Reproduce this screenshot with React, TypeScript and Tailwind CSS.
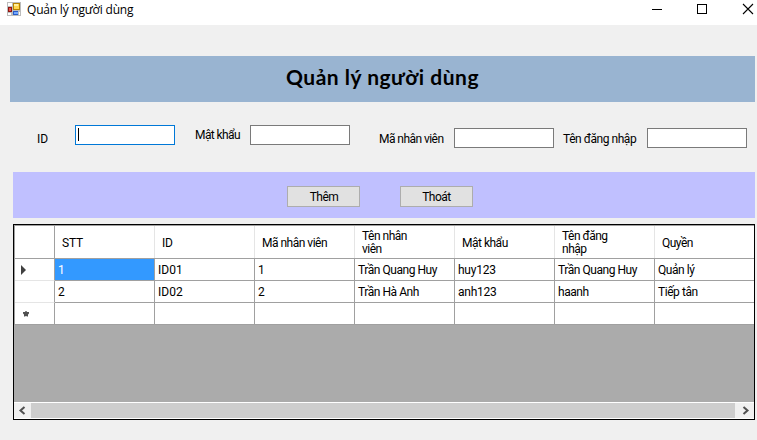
import React from "react";

const columns = ["STT", "ID", "Mã nhân viên", "Tên nhân viên", "Mật khẩu", "Tên đăng nhập", "Quyền"];
const rows = [
  ["1", "ID01", "1", "Trần Quang Huy", "huy123", "Trần Quang Huy", "Quản lý"],
  ["2", "ID02", "2", "Trần Hà Anh", "anh123", "haanh", "Tiếp tân"],
  ["", "", "", "", "", "", ""],
];

// Numbers and codes are set at their natural width, words slightly condensed.
function cellTracking(value: string) {
  if (/^(ID)?\d+$/.test(value)) return "tracking-normal";
  if (/\d/.test(value)) return "tracking-[-0.25px]";
  return "tracking-[-0.45px]";
}

function FormIcon() {
  return (
    <svg width="14" height="14" viewBox="0 0 14 14" shapeRendering="crispEdges" className="ml-[7px] mt-[2px] shrink-0">
      <path fill="#bcbcbc" d="M0 0h14v14H0z" />
      <path fill="#fff" d="M1 1h4v3H1zM1 11h3v2H1zM12 10h1v3h-1z" />
      <path fill="#b78300" d="M6 1h7v7H6z" />
      <path fill="#ffd64e" d="M7 2h5v5H7z" />
      <path fill="#ffef9d" d="M7 2h4v2H7z" />
      <path fill="#8e1510" d="M1 5h4v5H1z" />
      <path fill="#e9534b" d="M2 6h2v3H2z" />
      <path fill="#275bc8" d="M6 9h5v4H6z" />
      <path fill="#72a7ff" d="M7 10h4v2H7z" />
    </svg>
  );
}

function RowMarker({ index }: { index: number }) {
  if (index === 0)
    return (
      <svg width="5" height="10" viewBox="0 0 5 10" className="ml-[6px] mt-px">
        <path d="M0 0L5 5L0 10Z" fill="#404040" />
      </svg>
    );
  if (index === 2)
    return (
      <svg width="6" height="6" viewBox="0 0 6 6" className="ml-2 mt-px">
        <path d="M2.3 0h1.4v1H6v1.6L5 3.4V5.4H3.6V5H2.4v.4H1V3.4L0 2.6V1h2.3z" fill="#505050" />
      </svg>
    );
  return null;
}

export default function App() {
  return (
    <div className="flex h-[440px] w-[757px] flex-col overflow-hidden bg-[#f0f0f0] font-['Roboto','Noto_Sans',sans-serif] text-[12px] leading-[13px] tracking-[-0.5px] text-black">
      <header className="flex h-[25px] shrink-0 items-start bg-white">
        <FormIcon />
        <span className="ml-[6px] mt-[2px] grow whitespace-nowrap font-['Open_Sans','Noto_Sans',sans-serif] text-[12px] leading-4 tracking-[-0.2px]">
          Quản lý người dùng
        </span>
        <svg width="105" height="18" viewBox="0 0 105 18" fill="none" stroke="#000" className="shrink-0">
          <path d="M0 9.5h10M45.5 4.5h9v9h-9z" shapeRendering="crispEdges" />
          <path d="M91 4l10 10M101 4L91 14" strokeWidth="1.1" />
        </svg>
      </header>

      <h1 className="ml-[10px] mt-[31px] flex h-[46px] w-[745px] shrink-0 justify-center bg-[#99b4d1] pt-[8px] font-['Lato','Noto_Sans',sans-serif] text-[21px] font-bold leading-[26px] tracking-[0.5px]">
        Quản lý người dùng
      </h1>

      <div className="flex h-[70px] shrink-0 items-start whitespace-nowrap">
        <label className="ml-[37px] mt-[31px] w-[38px] tracking-normal">ID</label>
        <div className="mt-[23px] h-5 w-[100px] border border-[#0078d7] bg-white pl-[2px] pt-[2px]">
          <div className="h-[13px] w-px bg-black" />
        </div>
        <label className="ml-5 mt-[27px] w-[55px] tracking-[-0.6px]">Mật khẩu</label>
        <div className="mt-[23px] h-5 w-[100px] border border-[#7a7a7a] bg-white" />
        <label className="ml-[29px] mt-[31px] w-[75px] tracking-[-0.55px]">Mã nhân viên</label>
        <div className="mt-[26px] h-5 w-[100px] border border-[#7a7a7a] bg-white" />
        <label className="ml-[9px] mt-[31px] w-[84px] tracking-[-0.45px]">Tên đăng nhập</label>
        <div className="mt-[26px] h-5 w-[100px] border border-[#7a7a7a] bg-white" />
      </div>

      <div className="ml-[13px] flex h-[46px] w-[742px] shrink-0 items-start gap-10 bg-[#c0c0ff] pl-[274px] pt-[14px]">
        <button className="h-[21px] w-[73px] border border-[#adadad] bg-[#e1e1e1] pl-px pt-[2px]">Thêm</button>
        <button className="h-[21px] w-[73px] border border-[#adadad] bg-[#e1e1e1] pt-[2px]">Thoát</button>
      </div>

      <div className="ml-[13px] mt-[6px] flex h-[196px] w-[742px] shrink-0 flex-col overflow-hidden border border-black bg-[#ababab]">
        <div className="flex h-[34px] shrink-0 border-b border-l border-t border-[#a0a0a0] bg-white">
          <div className="w-10 shrink-0 border-r border-[#a0a0a0]" />
          {columns.map((c, i) => (
            <div key={c} className={`flex w-[100px] shrink-0 items-center pl-[7px] pt-[2px] ${i < 6 ? "border-r border-[#e5e5e5]" : ""}`}>
              <span className={i < 2 ? "w-[67px] tracking-[-0.2px]" : "w-[67px]"}>{c}</span>
            </div>
          ))}
        </div>
        {rows.map((r, y) => (
          <div key={y} className="flex h-[22px] shrink-0 border-l border-[#a0a0a0] bg-white">
            <div className={`flex w-10 shrink-0 items-center border-b border-r border-r-[#a0a0a0] ${y === 2 ? "border-b-[#a0a0a0]" : "border-b-[#e5e5e5]"}`}>
              <RowMarker index={y} />
            </div>
            {r.map((v, x) => (
              <div
                key={x}
                className={`w-[100px] shrink-0 whitespace-nowrap border-b border-r border-[#a0a0a0] pl-[3px] pt-[5px] ${cellTracking(v)} ${x === 0 && y === 0 ? "bg-[#3399ff] text-white" : ""}`}
              >
                {v}
              </div>
            ))}
          </div>
        ))}
        <div className="mt-auto flex h-[17px] shrink-0 items-center border-b border-t border-white bg-[#f0f0f0]">
          <svg width="17" height="15" viewBox="0 0 17 15" fill="none" stroke="#505050" strokeWidth="2">
            <path d="M10.5 4L6.5 7.5l4 3.5" />
          </svg>
          <div className="h-[15px] w-[704px] bg-[#cdcdcd]" />
          <svg width="19" height="15" viewBox="0 0 19 15" fill="none" stroke="#505050" strokeWidth="2">
            <path d="M8.5 4l4 3.5l-4 3.5" />
          </svg>
        </div>
      </div>
    </div>
  );
}
